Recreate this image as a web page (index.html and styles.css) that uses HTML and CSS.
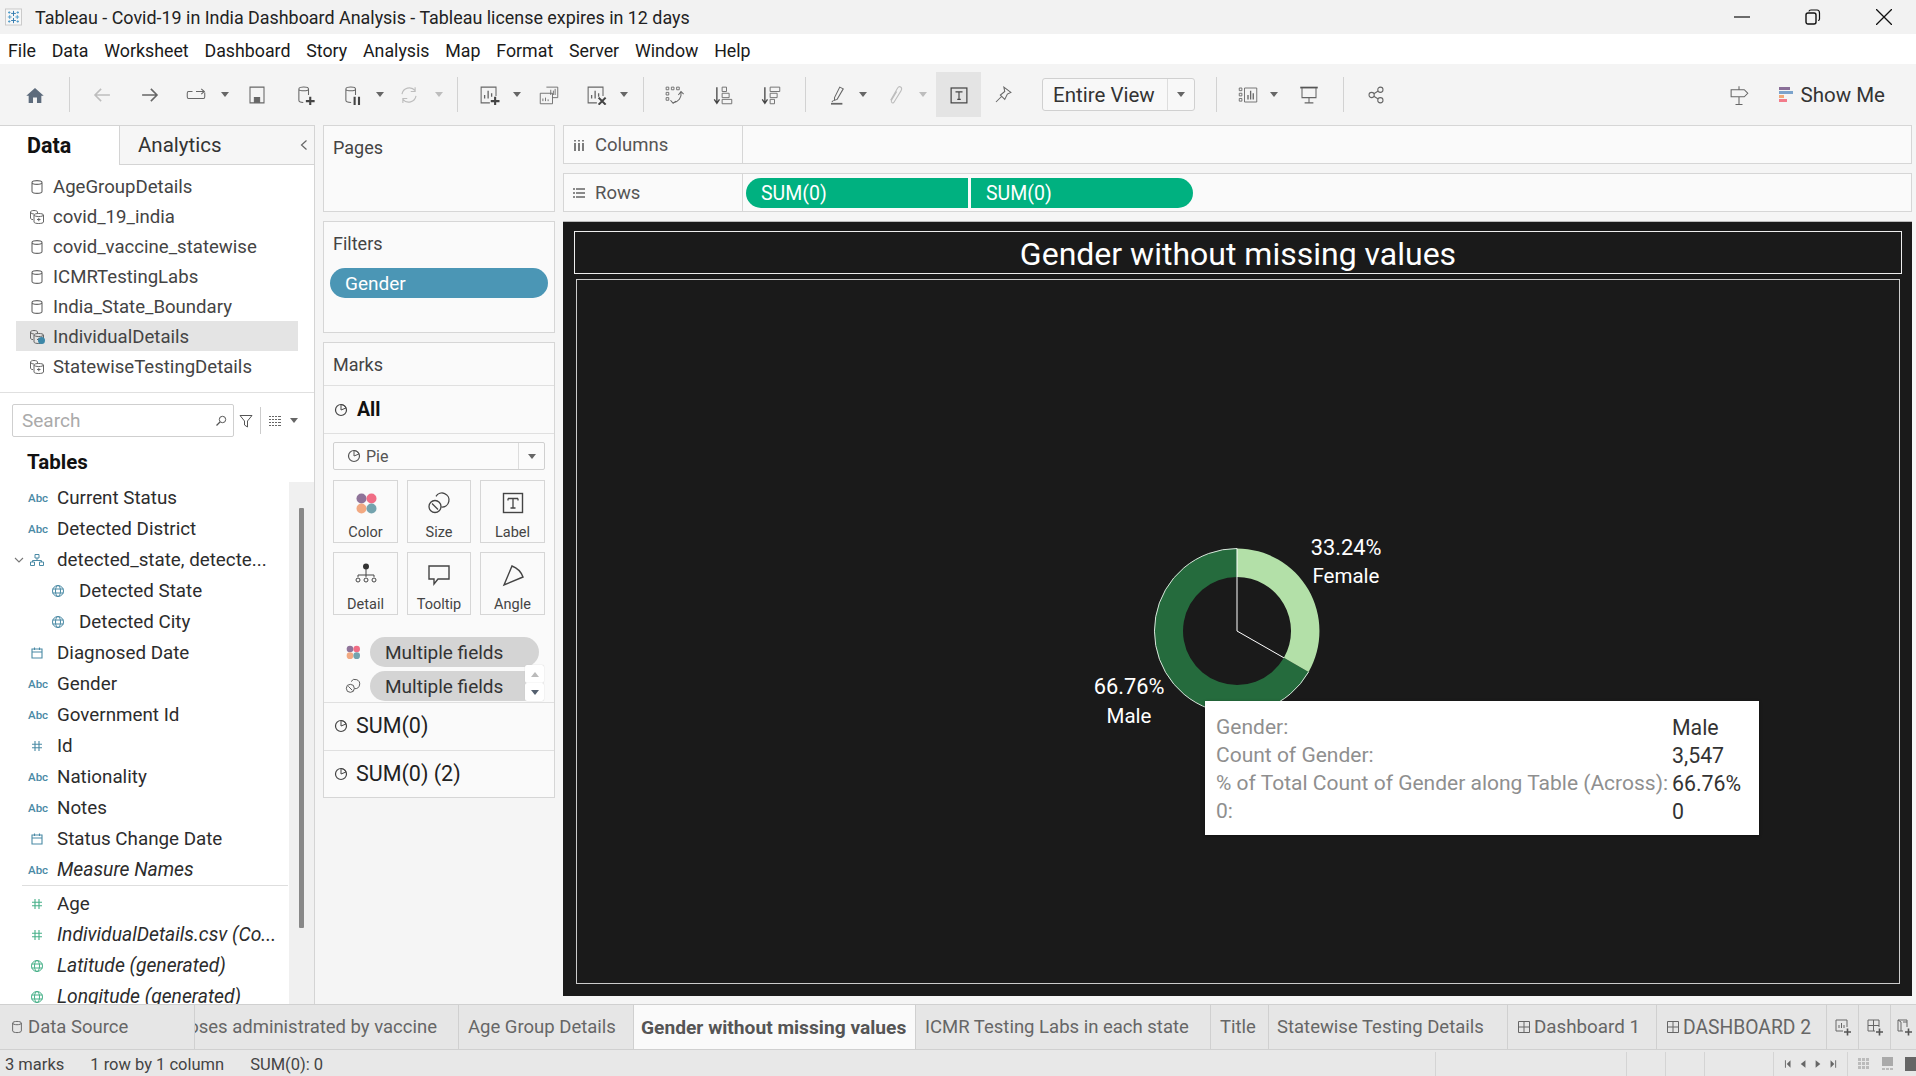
FILE: index.html
```html
<!DOCTYPE html>
<html lang="en">
<head>
<meta charset="utf-8">
<title>Tableau - Covid-19 in India Dashboard Analysis</title>
<link rel="stylesheet" href="styles.css">
</head>
<body>
<svg class="defs" width="0" height="0">
  <symbol id="cyl" viewBox="0 0 16 16"><path d="M3 3.500C3 1 13 1 13 3.500V12.500C13 15 3 15 3 12.500ZM3 3.500C3 6 13 6 13 3.500" fill="none" stroke="currentColor" stroke-width="1.100"/></symbol>
  <symbol id="cyl2" viewBox="0 0 16 16"><path d="M1.500 3C1.500 1 8.500 1 8.500 3V4M1.500 3V9C1.500 10 2.500 10.500 4 10.600M1.500 3C1.500 4.600 4 5 5 5" fill="none" stroke="currentColor"/><path d="M5 6C5 4 14.500 4 14.500 6V13C14.500 15 5 15 5 13ZM5 6C5 8 14.500 8 14.500 6M8 10.500H11.500M9.800 8.800V12.200" fill="none" stroke="currentColor"/></symbol>
  <symbol id="pie" viewBox="0 0 14 14"><circle cx="7" cy="7" r="5.500" fill="none" stroke="currentColor" stroke-width="1.200"/><path d="M7 7V1.500A5.500 5.500 0 0 1 12 5Z" fill="none" stroke="currentColor"/></symbol>
  <symbol id="globe" viewBox="0 0 14 14"><g fill="none" stroke="currentColor"><circle cx="7" cy="7" r="5.500"/><ellipse cx="7" cy="7" rx="2.500" ry="5.500"/><path d="M1.500 5H12.500M1.500 9H12.500"/></g></symbol>
  <symbol id="cal" viewBox="0 0 14 14"><path d="M2 3H12V12H2ZM2 6H12M4.500 1.500V4M9.500 1.500V4" fill="none" stroke="currentColor" stroke-width="1.100"/></symbol>
  <symbol id="hash" viewBox="0 0 14 14"><path d="M5 2V12M9 2V12M2 5.200H12M2 8.800H12" fill="none" stroke="currentColor" stroke-width="1.100"/></symbol>
  <symbol id="grid4" viewBox="0 0 14 14"><path d="M1.500 1.500H12.500V12.500H1.500ZM7 1.500V12.500M1.500 7H12.500" fill="none" stroke="currentColor"/></symbol>
  <symbol id="dots" viewBox="0 0 24 24"><circle cx="7.500" cy="7.500" r="5" fill="#8f7399"/><circle cx="17.500" cy="7.500" r="5" fill="#f06d85"/><circle cx="7.500" cy="17.500" r="5" fill="#f2a982"/><circle cx="17.500" cy="17.500" r="5" fill="#74a3ae"/></symbol>
  <symbol id="size" viewBox="0 0 24 24"><g fill="none" stroke="#444" stroke-width="1.300"><path d="M9 5.400A7 7 0 1 1 14.500 16"/><circle cx="8" cy="15.500" r="6"/><path d="M5 12.500L11 18.500"/></g></symbol>
</svg>

<div class="app">
  <header class="titlebar">
    <svg class="logo" width="17" height="18" viewBox="0 0 18 18"><rect x=".5" y=".5" width="17" height="17" fill="#f7f7f7" stroke="#c8c8c8"/><g stroke="#2f78ad" fill="none"><path d="M9 2.500V8M6.500 5.200H11.500M9 10V15.500M6.500 12.700H11.500"/><path d="M5 7V11M3 9H7M13 7V11M11 9H15M4.500 3V5.500M3.200 4.200H5.800M13.500 3V5.500M12.200 4.200H14.800M4.500 12.500V15M3.200 13.700H5.800M13.500 12.500V15M12.200 13.700H14.800" stroke="#4d9ac9"/></g></svg>
    <span class="title-text">Tableau - Covid-19 in India Dashboard Analysis - Tableau license expires in 12 days</span>
    <div class="winctl">
      <svg width="16" height="16" viewBox="0 0 16 16"><path d="M0 8H16" stroke="#111" stroke-width="1.200"/></svg>
      <svg width="16" height="16" viewBox="0 0 16 16"><rect x="1" y="4" width="10" height="11" rx="2" fill="none" stroke="#111" stroke-width="1.400"/><path d="M4 2.500C4 1.500 5 1 6 1H12C14 1 14.500 2 14.500 4V10C14.500 11 14 11.500 13 11.500" fill="none" stroke="#111" stroke-width="1.200"/></svg>
      <svg width="16" height="16" viewBox="0 0 16 16"><path d="M0 0L16 16M16 0L0 16" stroke="#111" stroke-width="1.300"/></svg>
    </div>
  </header>

  <nav class="menubar">
    <span>File</span><span>Data</span><span>Worksheet</span><span>Dashboard</span><span>Story</span><span>Analysis</span><span>Map</span><span>Format</span><span>Server</span><span>Window</span><span>Help</span>
  </nav>

  <div class="toolbar">
    <svg class="ti ml-23 home" viewBox="0 0 24 24"><path d="M12 3L23 13H20V22H14.500V15H9.500V22H4V13H1Z" fill="#5d6b7c"/></svg>
    <i class="sep ml-22"></i>
    <svg class="ti ml-20 off" viewBox="0 0 24 24"><path d="M21 12H4M11 5L4 12L11 19" fill="none" stroke="currentColor" stroke-width="1.800"/></svg>
    <svg class="ti ml-24" viewBox="0 0 24 24"><path d="M3 12H20M13 5L20 12L13 19" fill="none" stroke="currentColor" stroke-width="1.800"/></svg>
    <svg class="ti ml-22" viewBox="0 0 24 24"><path d="M8 8H3.500Q2 8 2 10V14Q2 16 3.500 16H20.500Q22 16 22 14V9M12 8H22M18 5L21.500 8L18 11" fill="none" stroke="currentColor" stroke-width="1.200"/></svg>
    <i class="caret ml-13"></i>
    <svg class="ti ml-16" viewBox="0 0 24 24"><path d="M4 3H20V21H4ZM9 21V15H15V21Z" fill="none" stroke="currentColor" stroke-width="1.200"/><rect x="9" y="15" width="6" height="6" fill="currentColor"/></svg>
    <svg class="ti ml-24" viewBox="0 0 24 24"><path d="M5 5C5 2 16 2 16 5V12M5 5V18C5 20 7 20.500 10 20.500M5 5C5 8 16 8 16 5" fill="none" stroke="currentColor" stroke-width="1.200"/><path d="M13 19H23M18 14V24" stroke="#444" stroke-width="2.400"/></svg>
    <svg class="ti ml-23" viewBox="0 0 24 24"><path d="M5 5C5 2 16 2 16 5V12M5 5V18C5 20 7 20.500 11 20.500M5 5C5 8 16 8 16 5" fill="none" stroke="currentColor" stroke-width="1.200"/><path d="M15 14V24M20 14V24" stroke="#444" stroke-width="2.400"/></svg>
    <i class="caret ml-12"></i>
    <svg class="ti ml-13 off" viewBox="0 0 24 24"><path d="M4 11A8.500 8.500 0 0 1 19 7M20 13A8.500 8.500 0 0 1 5 17M19 3V8H14M5 21V16H10" fill="none" stroke="currentColor" stroke-width="1.300"/></svg>
    <i class="caret off-caret ml-14"></i>
    <i class="sep ml-14"></i>
    <svg class="ti ml-19" viewBox="0 0 24 24"><path d="M13 21H3V3H20V13" fill="none" stroke="currentColor" stroke-width="1.200"/><path d="M7 16V12M11 16V7M15 14V10" stroke="currentColor" stroke-width="1.500"/><path d="M14 19H24M19 14V24" stroke="#444" stroke-width="2.400"/></svg>
    <i class="caret ml-12"></i>
    <svg class="ti ml-16" viewBox="0 0 24 24"><path d="M9 3H22V15H16M2 10H16V22H2ZM14 12V6M17 12V7M19 12V5" fill="none" stroke="currentColor"/><path d="M5 19V16M8 19V15M11 19V17" stroke="currentColor"/></svg>
    <svg class="ti ml-23" viewBox="0 0 24 24"><path d="M13 21H3V3H20V13" fill="none" stroke="currentColor" stroke-width="1.200"/><path d="M7 16V12M11 16V7M15 14V10" stroke="currentColor" stroke-width="1.500"/><path d="M15 15L23 23M23 15L15 23" stroke="#444" stroke-width="2.400"/></svg>
    <i class="caret ml-12"></i>
    <i class="sep ml-15"></i>
    <svg class="ti ml-18" viewBox="0 0 24 24"><path d="M3 3H6V6H3ZM9 3H12V6H9ZM15 3H18V6H15ZM3 9H6V12H3ZM3 15H6V18H3Z" fill="none" stroke="currentColor"/><path d="M20 9C21 15 17 20 11 21M8 18L11 21.500L14 19M17 12L20 8L23 11" fill="none" stroke="currentColor" stroke-width="1.200"/></svg>
    <svg class="ti ml-25" viewBox="0 0 24 24"><path d="M5 3V21M2 17L5 21.500L8 17" fill="none" stroke="#444" stroke-width="1.500"/><path d="M11 3H16V8H11ZM11 10H19V15H11ZM11 17H22V22H11Z" fill="none" stroke="currentColor"/></svg>
    <svg class="ti ml-24" viewBox="0 0 24 24"><path d="M5 3V21M2 17L5 21.500L8 17" fill="none" stroke="#444" stroke-width="1.500"/><path d="M11 3H22V8H11ZM11 10H19V15H11ZM11 17H16V22H11Z" fill="none" stroke="currentColor"/></svg>
    <i class="sep ml-22"></i>
    <svg class="ti ml-20" viewBox="0 0 24 24"><path d="M8 15L14 3L18 5L11 17L8 18ZM7 18L5 20" fill="none" stroke="currentColor" stroke-width="1.200"/><rect x="4" y="21" width="13" height="2" fill="#666"/></svg>
    <i class="caret ml-9"></i>
    <svg class="ti ml-16 off" viewBox="0 0 24 24"><path d="M7 18L15 4C17 1 21 3 19 7L11 20C10 22 7 21 8 18L14 8" fill="none" stroke="currentColor" stroke-width="1.200"/></svg>
    <i class="caret off-caret ml-12"></i>
    <div class="tb-active ml-9"><svg class="ti" viewBox="0 0 24 24"><rect x="3" y="4" width="18" height="17" fill="none" stroke="#444" stroke-width="1.400"/><path d="M8 8.500H16M12 8.500V17M10 17H14" fill="none" stroke="#444" stroke-width="1.300"/></svg></div>
    <svg class="ti ml-10" viewBox="0 0 24 24"><path d="M13 3L21 9L17 11L14 17L9 12L14 8ZM10 14L4 20" fill="none" stroke="currentColor" stroke-width="1.200"/></svg>
    <div class="viewbox ml-27"><span class="viewbox-text">Entire View</span><span class="viewbox-btn"><i class="caret"></i></span></div>
    <i class="sep ml-21"></i>
    <svg class="ti ml-19" viewBox="0 0 24 24"><path d="M2 4H5V7H2ZM2 10H5V13H2ZM2 16H5V19H2ZM8 4H22V20H8Z" fill="none" stroke="currentColor"/><path d="M12 17V12M15 17V7M18 17V10" stroke="currentColor" stroke-width="1.500"/></svg>
    <i class="caret ml-10"></i>
    <svg class="ti ml-19" viewBox="0 0 24 24"><path d="M2 3.500H22" stroke="#555" stroke-width="2"/><path d="M4 4V15H20V4M12 15V21M7 21H17" fill="none" stroke="currentColor" stroke-width="1.200"/></svg>
    <i class="sep ml-22"></i>
    <svg class="ti ml-20" viewBox="0 0 24 24"><g fill="none" stroke="currentColor" stroke-width="1.200"><circle cx="7" cy="12" r="3"/><circle cx="17" cy="6" r="3"/><circle cx="17" cy="18" r="3"/><path d="M9.500 10.500L14.500 7.500M9.500 13.500L14.500 16.500"/></g></svg>
    <svg class="ti push" viewBox="0 0 24 24"><path d="M12 2V6M3 6H18L22 10L18 14H3ZM12 14V23M8 23H16" fill="none" stroke="currentColor" stroke-width="1.200"/></svg>
    <div class="showme">
      <span class="sm-bars"><i class="b1"></i><i class="b2"></i><i class="b3"></i><i class="b4"></i></span>
      <span>Show Me</span>
    </div>
  </div>

  <main class="main">
    <aside class="datapane">
      <div class="tabs2">
        <div class="tab2 active">Data</div>
        <div class="tab2 other">Analytics<svg class="collapse" width="8" height="12" viewBox="0 0 8 12"><path d="M6.500 1.500L1.500 6L6.500 10.500" fill="none" stroke="#666" stroke-width="1.200"/></svg></div>
      </div>
      <ul class="sources">
        <li><svg class="si"><use href="#cyl"/></svg>AgeGroupDetails</li>
        <li><svg class="si"><use href="#cyl2"/></svg>covid_19_india</li>
        <li><svg class="si"><use href="#cyl"/></svg>covid_vaccine_statewise</li>
        <li><svg class="si"><use href="#cyl"/></svg>ICMRTestingLabs</li>
        <li><svg class="si"><use href="#cyl"/></svg>India_State_Boundary</li>
        <li class="sel"><svg class="si"><use href="#cyl2"/></svg><i class="check"></i>IndividualDetails</li>
        <li><svg class="si"><use href="#cyl2"/></svg>StatewiseTestingDetails</li>
      </ul>
      <div class="searchrow">
        <div class="search"><span>Search</span><svg width="12" height="12" viewBox="0 0 12 12"><circle cx="7.500" cy="4.500" r="3.200" fill="none" stroke="#555"/><path d="M5 7L1.500 10.500" stroke="#555" stroke-width="1.300"/></svg></div>
        <svg class="filt" width="14" height="14" viewBox="0 0 14 14"><path d="M1 1.500H13L8.500 7V13L5.500 11V7Z" fill="none" stroke="#555"/></svg>
        <i class="sr-sep"></i>
        <svg class="gridi" width="12" height="10" viewBox="0 0 12 10"><path d="M0 .5H2M3 .5H5M6 .5H8M9 .5H12M0 3.500H2M3 3.500H5M6 3.500H8M9 3.500H12M0 6.500H2M3 6.500H5M6 6.500H8M9 6.500H12M0 9.500H2M3 9.500H5M6 9.500H8M9 9.500H12" stroke="#666"/></svg>
        <i class="caret"></i>
      </div>
      <div class="tables-head">Tables</div>
      <div class="fieldarea">
        <ul class="fields">
          <li><span class="abc">Abc</span>Current Status</li>
          <li><span class="abc">Abc</span>Detected District</li>
          <li class="hier"><svg class="chev" width="10" height="6" viewBox="0 0 10 6"><path d="M1 1L5 5L9 1" fill="none" stroke="#777" stroke-width="1.100"/></svg><svg class="fi blue" viewBox="0 0 14 14"><path d="M5 1.500H9V5H5ZM7 5V7.500M2.500 7.500H11.500V9M2.500 7.500V9M.5 9H4.500V12.500H.5ZM9.500 9H13.500V12.500H9.500Z" fill="none" stroke="currentColor"/></svg>detected_state, detecte...</li>
          <li class="sub"><svg class="fi blue"><use href="#globe"/></svg>Detected State</li>
          <li class="sub"><svg class="fi blue"><use href="#globe"/></svg>Detected City</li>
          <li><svg class="fi blue"><use href="#cal"/></svg>Diagnosed Date</li>
          <li><span class="abc">Abc</span>Gender</li>
          <li><span class="abc">Abc</span>Government Id</li>
          <li><svg class="fi blue"><use href="#hash"/></svg>Id</li>
          <li><span class="abc">Abc</span>Nationality</li>
          <li><span class="abc">Abc</span>Notes</li>
          <li><svg class="fi blue"><use href="#cal"/></svg>Status Change Date</li>
          <li class="it"><span class="abc">Abc</span>Measure Names</li>
          <li class="rule"></li>
          <li><svg class="fi green"><use href="#hash"/></svg>Age</li>
          <li class="it"><svg class="fi green"><use href="#hash"/></svg>IndividualDetails.csv (Co...</li>
          <li class="it"><svg class="fi green"><use href="#globe"/></svg>Latitude (generated)</li>
          <li class="it"><svg class="fi green"><use href="#globe"/></svg>Longitude (generated)</li>
        </ul>
        <div class="scroll"><i class="thumb"></i></div>
      </div>
    </aside>

    <section class="cards">
      <div class="card pages"><div class="card-h">Pages</div></div>
      <div class="card filters">
        <div class="card-h">Filters</div>
        <div class="pill-filter">Gender</div>
      </div>
      <div class="card marks">
        <div class="card-h marks-h">Marks</div>
        <div class="mrow bold"><svg class="pi"><use href="#pie"/></svg>All</div>
        <div class="markbody">
          <div class="select"><span class="select-v"><svg class="pi"><use href="#pie"/></svg>Pie</span><span class="select-b"><i class="caret"></i></span></div>
          <div class="mbtns">
            <div class="mbtn"><svg class="mi"><use href="#dots"/></svg>Color</div>
            <div class="mbtn"><svg class="mi"><use href="#size"/></svg>Size</div>
            <div class="mbtn"><svg class="mi" viewBox="0 0 24 24"><rect x="2.500" y="2.500" width="19" height="19" fill="none" stroke="#444" stroke-width="1.400"/><path d="M7 7.500H17M7 7.500V9.500M17 7.500V9.500M12 7.500V17M9.500 17H14.500" fill="none" stroke="#444" stroke-width="1.300"/></svg>Label</div>
            <div class="mbtn"><svg class="mi" viewBox="0 0 24 24"><circle cx="12" cy="3.500" r="3" fill="#333"/><path d="M12 6V12M4 14V12H20V14M12 12V14" fill="none" stroke="#444"/><g fill="none" stroke="#444"><circle cx="4" cy="17" r="2"/><circle cx="12" cy="17" r="2"/><circle cx="20" cy="17" r="2"/></g></svg>Detail</div>
            <div class="mbtn"><svg class="mi" viewBox="0 0 24 24"><path d="M2 3H22V16H11L7 21V16H2Z" fill="none" stroke="#444" stroke-width="1.400"/></svg>Tooltip</div>
            <div class="mbtn"><svg class="mi" viewBox="0 0 24 24"><path d="M3 22L11 3Q19 6 22 14Z" fill="none" stroke="#444" stroke-width="1.400"/></svg>Angle</div>
          </div>
          <div class="mpill-row"><svg class="mpi"><use href="#dots"/></svg><div class="mpill">Multiple fields</div></div>
          <div class="mpill-row second"><svg class="mpi"><use href="#size"/></svg><div class="mpill">Multiple fields</div>
            <div class="spin"><span class="up"></span><span class="down"></span></div>
          </div>
        </div>
        <div class="mrow"><svg class="pi"><use href="#pie"/></svg>SUM(0)</div>
        <div class="mrow"><svg class="pi"><use href="#pie"/></svg>SUM(0) (2)</div>
      </div>
    </section>

    <section class="right">
      <div class="shelf">
        <div class="shelf-l"><svg class="shi" viewBox="0 0 12 12"><path d="M2 1V2.500M6 1V2.500M10 1V2.500M2 4V12M6 4V12M10 4V12" stroke="#666" stroke-width="1.700"/></svg>Columns</div>
      </div>
      <div class="shelf">
        <div class="shelf-l"><svg class="shi" viewBox="0 0 12 12"><path d="M0 2H2M3 2H12M0 6H2M3 6H12M0 10H2M3 10H12" stroke="#666" stroke-width="1.700"/></svg>Rows</div>
        <div class="shelf-pills"><span class="gp left">SUM(0)</span><span class="gp rgt">SUM(0)</span></div>
      </div>
      <div class="viz">
        <h1 class="viz-title">Gender without missing values</h1>
        <div class="plot">
          <svg class="chart" width="1322" height="702">
            <path d="M660 268.500A82.500 82.500 0 1 0 731.600 391.900L706.900 377.800A54 54 0 1 1 660 297Z" fill="#256b3d"/>
            <path d="M660 268.500A82.500 82.500 0 0 1 731.600 391.900L706.900 377.800A54 54 0 0 0 660 297Z" fill="#b3e0a8"/>
            <path d="M660 268.500A82.500 82.500 0 1 0 731.600 391.900" fill="none" stroke="#d9e6dc" stroke-width="1"/>
            <path d="M660 268.500V351L706.900 377.800" fill="none" stroke="#fff" stroke-width="1"/>
            <g class="lbl">
              <text class="pct" x="769" y="275">33.24%</text>
              <text x="769" y="303">Female</text>
              <text class="pct" x="552" y="414">66.76%</text>
              <text x="552" y="443">Male</text>
            </g>
          </svg>
          <div class="tooltip">
            <span class="k">Gender:</span><span class="v">Male</span>
            <span class="k">Count of Gender:</span><span class="v">3,547</span>
            <span class="k">% of Total Count of Gender along Table (Across):</span><span class="v">66.76%</span>
            <span class="k">0:</span><span class="v">0</span>
          </div>
        </div>
      </div>
    </section>
  </main>

  <div class="sheets">
    <div class="st ds"><svg class="sti"><use href="#cyl"/></svg>Data Source</div>
    <div class="st clip"><span>Doses administrated by vaccine</span></div>
    <div class="st age">Age Group Details</div>
    <div class="st cur">Gender without missing values</div>
    <div class="st icmr">ICMR Testing Labs in each state</div>
    <div class="st ttl">Title</div>
    <div class="st swd">Statewise Testing Details</div>
    <div class="st d1"><svg class="sti"><use href="#grid4"/></svg>Dashboard 1</div>
    <div class="st d2"><svg class="sti"><use href="#grid4"/></svg>DASHBOARD 2</div>
    <div class="st newt"><svg width="18" height="18" viewBox="0 0 18 18"><path d="M9 13H2V2H13V9M5 10V7M7.500 10V5M10 10V7" fill="none" stroke="#666"/><path d="M10 14H17M13.500 10.500V17.500" stroke="#555" stroke-width="1.600"/></svg></div>
    <div class="st newt"><svg width="18" height="18" viewBox="0 0 18 18"><path d="M9 13H2V2H13V9M7.500 2V13M2 7.500H13" fill="none" stroke="#666"/><path d="M10 14H17M13.500 10.500V17.500" stroke="#555" stroke-width="1.600"/></svg></div>
    <div class="st newt last"><svg width="18" height="18" viewBox="0 0 18 18"><path d="M8 13H3V2H12V9M3 2L6 4V13M8 4H12" fill="none" stroke="#666"/><path d="M10 14H17M13.500 10.500V17.500" stroke="#555" stroke-width="1.600"/></svg></div>
  </div>

  <footer class="status">
    <span class="s1">3 marks</span><span class="s2">1 row by 1 column</span><span class="s3">SUM(0): 0</span>
    <i class="sd d-a"></i><i class="sd d-b"></i><i class="sd d-c"></i><i class="sd d-d"></i><i class="sd d-f"></i>
    <svg class="nav" width="54" height="10" viewBox="0 0 58 10"><g fill="#666"><path d="M1 1H2V9H1ZM7 1V9L3 5Z"/><path d="M23 1V9L18 5Z"/><path d="M34 1V9L39 5Z"/><path d="M50 1V9L54 5ZM55 1H56V9H55Z"/></g></svg>
    <i class="sd d-e"></i>
    <svg class="view" width="58" height="14" viewBox="0 0 58 14"><g fill="#bbb"><path d="M0 1H3V4H0ZM4 1H7V4H4ZM8 1H11V4H8ZM0 5H3V8H0ZM4 5H7V8H4ZM8 5H11V8H8ZM0 9H3V12H0ZM4 9H7V12H4ZM8 9H11V12H8Z"/></g><path d="M24 0H35V9H24Z" fill="#aaa"/><path d="M24 11H27V13H24ZM28 11H31V13H28ZM32 11H35V13H32Z" fill="#bbb"/><rect x="47" y="0" width="11" height="14" fill="#666"/></svg>
  </footer>
</div>
</body>
</html>
```

FILE: styles.css
```css
* { box-sizing: border-box; }
html, body { margin: 0; padding: 0; height: 100%; overflow: hidden; }
body { font-family: Roboto, "Liberation Sans", sans-serif; color: #333; font-size: 18px; background: #f5f5f5; }
i { display: block; font-style: normal; }
ul { list-style: none; margin: 0; padding: 0; }
h1 { margin: 0; font-weight: 400; }
.defs { position: absolute; }

.app { display: flex; flex-direction: column; width: 1916px; height: 1076px; }

/* window chrome */
.titlebar { height: 34px; flex: none; background: #f2f2f2; display: flex; align-items: center; padding-left: 5px; color: #222; }
.logo { flex: none; margin-right: 13px; }
.title-text { font-size: 17.900px; padding-top: 1px; }
.winctl { margin-left: auto; display: flex; align-items: center; gap: 55px; margin-right: 24px; }
.winctl svg { display: block; }

.menubar { height: 30px; flex: none; background: #fff; display: flex; align-items: center; padding: 2px 0 0 8px; gap: 15.800px; font-size: 17.800px; color: #1a1a1a; }

/* toolbar */
.toolbar { height: 61px; flex: none; background: #f4f4f4; display: flex; align-items: center; color: #666; }
.ti { width: 24px; height: 24px; padding: 1.500px; flex: none; display: block; color: #666; }
.off { color: #bdbdbd; }
.home { color: #5d6b7c; padding: 2.500px; }
.sep { width: 1px; height: 35px; background: #d2d2d2; flex: none; }
.caret { width: 0; height: 0; border-left: 4px solid transparent; border-right: 4px solid transparent; border-top: 5px solid #666; flex: none; }
.off-caret { border-top-color: #bdbdbd; }
.ml-9 { margin-left: 9px; } .ml-10 { margin-left: 10px; } .ml-12 { margin-left: 12px; } .ml-13 { margin-left: 13px; }
.ml-14 { margin-left: 14px; } .ml-15 { margin-left: 15px; } .ml-16 { margin-left: 16px; } .ml-18 { margin-left: 18px; }
.ml-19 { margin-left: 19px; } .ml-20 { margin-left: 20px; } .ml-21 { margin-left: 21px; } .ml-22 { margin-left: 22px; }
.ml-23 { margin-left: 23px; } .ml-24 { margin-left: 24px; } .ml-25 { margin-left: 25px; } .ml-27 { margin-left: 27px; }
.tb-active { width: 45px; height: 45px; background: #e4e4e4; display: flex; align-items: center; justify-content: center; flex: none; }
.viewbox { width: 153px; height: 33px; border: 1px solid #d0d0d0; border-radius: 3px; background: #f8f8f8; display: flex; flex: none; }
.viewbox-text { flex: 1; padding: 1px 0 0 10px; font-size: 20.500px; line-height: 31px; color: #333; }
.viewbox-btn { width: 27px; border-left: 1px solid #ddd; display: flex; align-items: center; justify-content: center; }
.push { margin-left: auto; }
.showme { display: flex; align-items: center; gap: 8px; margin: 0 31px 0 28px; font-size: 20.500px; color: #333; }
.sm-bars { width: 14px; display: flex; flex-direction: column; gap: 1px; }
.sm-bars i { height: 3px; }
.b1 { width: 11px; background: #8a6f98; }
.b2 { width: 14px; background: #7ba3cc; }
.b3 { width: 5px; background: #f0a878; }
.b4 { width: 8px; background: #f27b8a; }

/* main */
.main { flex: 1; min-height: 0; display: flex; }

/* data pane */
.datapane { width: 315px; flex: none; background: #fff; border-right: 1px solid #d4d4d4; border-top: 1px solid #d4d4d4; display: flex; flex-direction: column; }
.tabs2 { height: 39px; flex: none; display: flex; }
.tab2 { display: flex; align-items: center; font-size: 20.500px; }
.tab2.active { width: 119px; padding-left: 27px; font-weight: 700; color: #111; font-size: 21.500px; }
.tab2.other { flex: 1; padding-left: 18px; background: #f6f6f6; border-left: 1px solid #d4d4d4; border-bottom: 1px solid #d4d4d4; color: #333; }
.collapse { margin-left: auto; margin-right: 6px; }
.sources { padding: 6px 0 10px 16px; border-bottom: 1px solid #e0e0e0; flex: none; height: 228px; }
.sources li { height: 30px; width: 282px; display: flex; align-items: center; color: #444; position: relative; font-size: 18.600px; padding-top: 1px; }
.sources li.sel { background: #e4e4e4; }
.si { width: 16px; height: 16px; margin: 0 8px 0 13px; color: #666; flex: none; }
.check { position: absolute; left: 22px; top: 16px; width: 7px; height: 7px; background: #3d87a8; border-radius: 50%; }
.searchrow { height: 33px; margin: 11px 0 0 12px; display: flex; align-items: center; flex: none; }
.search { width: 222px; height: 33px; border: 1px solid #cfcfcf; border-radius: 2px; display: flex; align-items: center; justify-content: space-between; padding: 0 6px 0 9px; color: #aaa; font-size: 19px; }
.filt { margin-left: 5px; }
.sr-sep { width: 1px; height: 27px; background: #ccc; margin: 0 8px 0 7px; }
.gridi { margin-right: 9px; }
.tables-head { height: 45px; flex: none; display: flex; align-items: center; padding: 4px 0 0 27px; font-size: 20.500px; font-weight: 700; color: #111; }
.fieldarea { flex: 1; min-height: 0; display: flex; overflow: hidden; }
.fields { flex: 1; min-width: 0; }
.fields li { height: 31px; display: flex; align-items: center; color: #2c2c2c; padding-left: 28px; position: relative; font-size: 18.800px; white-space: nowrap; }
.fields li.sub { padding-left: 49px; }
.fields li.sub .fi { margin-right: 14px; }
.fields li.it { font-style: italic; font-size: 19.300px; }
.fields li.rule { height: 1px; background: #dedede; margin: 0 1px 0 22px; padding: 0; }
.fields li.rule + li { margin-top: 2px; }
.hier .chev { position: absolute; left: 14px; top: 13px; }
.abc { width: 18px; margin-right: 11px; font-size: 11.500px; font-style: normal; font-weight: 500; color: #4a8aa5; text-align: center; flex: none; }
.fi { width: 14px; height: 14px; margin: 0 13px 0 2px; flex: none; }
.blue { color: #4a8aa5; }
.green { color: #46b088; }
.scroll { width: 25px; flex: none; background: #f0f0f0; padding: 26px 0 0 10px; }
.thumb { width: 5px; height: 420px; background: #888; border-radius: 1px; }

/* pages / filters / marks */
.cards { width: 232px; margin-left: 8px; flex: none; display: flex; flex-direction: column; gap: 9px; }
.card { background: #fafafa; border: 1px solid #d6d6d6; flex: none; color: #444; }
.card-h { padding: 2px 0 0 9px; height: 41px; display: flex; align-items: center; font-size: 18px; color: #444; }
.pages { height: 87px; }
.pages .card-h { padding-top: 1px; }
.filters { height: 112px; }
.pill-filter { height: 30px; margin: 5px 6px 0; border-radius: 15px; background: #4b96b5; color: #fff; font-size: 19px; line-height: 32px; padding-left: 15px; }
.marks { height: 456px; }
.marks-h { height: 43px; border-bottom: 1px solid #e0e0e0; padding-top: 0; }
.mrow { height: 48px; display: flex; align-items: center; padding: 0 0 2px 10px; font-size: 21.500px; color: #222; border-bottom: 1px solid #e0e0e0; }
.mrow:last-child { border-bottom: 0; padding-bottom: 3px; }
.mrow.bold { font-weight: 700; color: #111; font-size: 19.500px; padding-bottom: 0; }
.pi { width: 14px; height: 14px; margin-right: 8px; color: #444; flex: none; }
.mrow.bold .pi { margin-right: 9px; }
.markbody { height: 269px; border-bottom: 1px solid #e0e0e0; padding: 8px 9px 0; }
.select { height: 28px; border: 1px solid #d0d0d0; border-radius: 2px; background: #fbfbfb; display: flex; font-size: 16px; color: #555; }
.select-v { flex: 1; display: flex; align-items: center; padding-left: 13px; }
.select-v .pi { margin-right: 5px; color: #555; }
.select-b { width: 26px; border-left: 1px solid #ddd; display: flex; align-items: center; justify-content: center; }
.mbtns { display: grid; grid-template-columns: 65px 64px 65px; column-gap: 9px; row-gap: 9px; margin-top: 10px; margin-bottom: 22px; }
.mbtn { height: 63px; border: 1px solid #d6d6d6; display: flex; flex-direction: column; align-items: center; padding-top: 10px; font-size: 14.500px; color: #444; }
.mi { width: 24px; height: 24px; margin-bottom: 9px; flex: none; }
.mpill-row { height: 30px; display: flex; align-items: center; position: relative; }
.mpill-row.second { margin-top: 4px; }
.mpi { width: 16px; height: 16px; margin: 0 9px 0 12px; flex: none; }
.mpill { width: 169px; height: 30px; border-radius: 15px; background: #d4d4d4; color: #333; padding-left: 15px; line-height: 31px; font-size: 19px; }
.spin { position: absolute; left: 192px; top: -6px; width: 19px; display: flex; flex-direction: column; }
.spin span { height: 18px; background: #fff; display: flex; align-items: center; justify-content: center; border-radius: 2px; box-shadow: 0 0 1px #bbb; }
.spin .up::before { content: ""; border: 4px solid transparent; border-top: 0; border-bottom: 5px solid #bbb; }
.spin .down::before { content: ""; border: 4px solid transparent; border-bottom: 0; border-top: 5px solid #55606f; }

/* shelves and view */
.right { flex: 1; min-width: 0; margin: 0 4px 0 8px; display: flex; flex-direction: column; gap: 9px; }
.shelf { height: 39px; flex: none; background: #fafafa; border: 1px solid #d6d6d6; display: flex; }
.shelf-l { width: 179px; border-right: 1px solid #d6d6d6; display: flex; align-items: center; padding: 1px 0 0 9px; gap: 10px; font-size: 18.500px; color: #555; }
.shi { width: 12px; height: 12px; flex: none; }
.shelf-pills { display: flex; align-items: center; gap: 3px; padding-left: 3px; }
.gp { height: 30px; background: #00b180; color: #fff; line-height: 32px; font-size: 19.500px; padding-left: 15px; }
.gp.left { width: 222px; border-radius: 15px 0 0 15px; }
.gp.rgt { width: 222px; border-radius: 0 15px 15px 0; }
.viz { height: 775px; flex: none; background: #1a1a1a; border-top: 1px solid #bbb; padding: 9px 10px 12px 11px; display: flex; flex-direction: column; gap: 5px; }
.viz-title { height: 43px; flex: none; border: 1px solid #eee; color: #fff; font-size: 32px; line-height: 44px; text-align: center; font-weight: 400; }
.plot { flex: 1; min-height: 0; margin: 0 2px; border: 1px solid #ccc; position: relative; }
.chart { display: block; }
.lbl text { fill: #fff; font-size: 20.500px; text-anchor: middle; font-family: Roboto, "Liberation Sans", sans-serif; }
.lbl .pct { font-size: 21.800px; }
.tooltip { position: absolute; left: 628px; top: 421px; width: 554px; height: 134px; background: #fff; padding: 12px 10px 12px 11px; display: grid; grid-template-columns: 456px 1fr; grid-auto-rows: 28px; align-items: center; font-size: 21px; box-shadow: 0 1px 3px rgba(0,0,0,.4); }
.k { color: #8f8f8f; white-space: nowrap; }
.v { color: #333; font-size: 21.300px; }

/* sheet tabs */
.sheets { height: 46px; flex: none; display: flex; border-top: 1px solid #d0d0d0; border-bottom: 1px solid #d0d0d0; background: #e6e6e6; }
.st { height: 100%; flex: none; border-right: 1px solid #d0d0d0; display: flex; align-items: center; font-size: 18.500px; color: #666; white-space: nowrap; padding-left: 9px; overflow: hidden; }
.sti { width: 14px; height: 14px; color: #666; margin-right: 3px; flex: none; }
.ds { width: 195px; padding-left: 10px; }
.ds .sti { margin-right: 4px; }
.clip { width: 264px; justify-content: flex-end; padding-right: 21px; padding-left: 0; }
.clip span { flex: none; }
.age { width: 175px; }
.cur { width: 282px; background: #fafafa; color: #555; font-weight: 700; font-size: 19.200px; padding-left: 7px; }
.icmr { width: 295px; }
.ttl { width: 58px; }
.swd { width: 239px; padding-left: 8px; }
.d1 { width: 149px; padding-left: 9px; font-size: 18.800px; }
.d2 { width: 170px; padding-left: 9px; font-size: 19.300px; }
.newt { width: 32px; justify-content: center; padding: 0; }
.newt.last { width: 25px; border-right: 0; }

/* status bar */
.status { height: 26px; flex: none; background: #e8e8e8; display: flex; align-items: center; padding-top: 2px; font-size: 16.500px; color: #444; }
.s1 { margin-left: 5px; }
.s2 { margin-left: 26px; }
.s3 { margin-left: 26px; }
.sd { width: 1px; height: 24px; background: #d4d4d4; flex: none; }
.d-a { margin-left: auto; }
.d-b { margin-left: 190px; }
.d-c { margin-left: 38px; }
.d-d { margin-left: 38px; }
.d-f { margin-left: 68px; }
.nav { margin-left: 10px; flex: none; }
.d-e { margin-left: 9px; }
.view { margin-left: 10px; flex: none; }
```
